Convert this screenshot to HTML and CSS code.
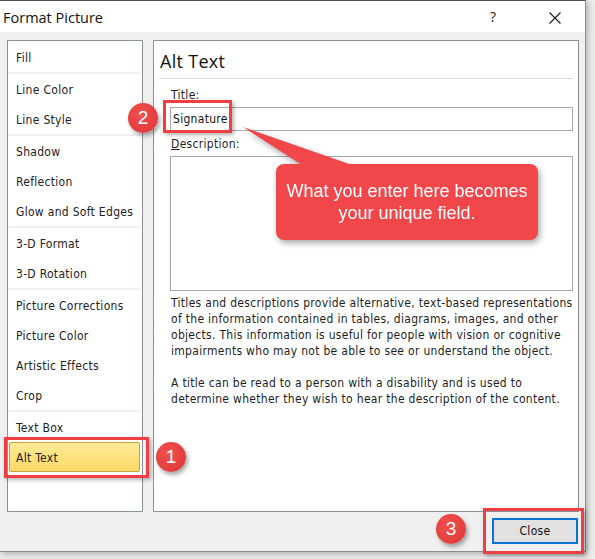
FILE: index.html
```html
<!DOCTYPE html>
<html>
<head>
<meta charset="utf-8">
<link rel="stylesheet" href="styles.css">
</head>
<body>
<div class="window">
  <div class="titlebar">
    <span class="title">Format Picture</span>
    <span class="help">?</span>
    <svg class="close-x" width="14" height="14" viewBox="0 0 14 14"><path d="M1.5 1.5 L12.5 12.5 M12.5 1.5 L1.5 12.5" stroke="#1a1a1a" stroke-width="1.1" fill="none"/></svg>
  </div>
  <div class="content">
    <div class="nav">
      <div class="group"><div class="item">Fill</div></div>
      <div class="group"><div class="item">Line Color</div><div class="item">Line Style</div></div>
      <div class="group"><div class="item">Shadow</div><div class="item">Reflection</div><div class="item">Glow and Soft Edges</div></div>
      <div class="group"><div class="item">3-D Format</div><div class="item">3-D Rotation</div></div>
      <div class="group"><div class="item">Picture Corrections</div><div class="item">Picture Color</div><div class="item">Artistic Effects</div><div class="item">Crop</div></div>
      <div class="group"><div class="item">Text Box</div><div class="item selected">Alt Text</div></div>
    </div>
    <div class="pane">
      <div class="pane-head">Alt Text</div>
      <div class="form">
        <div class="label">Title:</div>
        <div class="input">Signature</div>
        <div class="label label-desc"><u>D</u>escription:</div>
        <div class="textarea"></div>
        <p class="info">Titles and descriptions provide alternative, text-based representations<br>of the information contained in tables, diagrams, images, and other<br>objects. This information is useful for people with vision or cognitive<br>impairments who may not be able to see or understand the object.</p>
        <p class="info">A title can be read to a person with a disability and is used to<br>determine whether they wish to hear the description of the content.</p>
      </div>
    </div>
  </div>
  <div class="footer">
    <div class="btn">Close</div>
  </div>

  <div class="hl hl-title"></div>
  <div class="hl hl-alt"></div>
  <div class="hl hl-close"></div>
  <div class="badge badge-1">1</div>
  <div class="badge badge-2">2</div>
  <div class="badge badge-3">3</div>
  <div class="callout">
    <svg class="callout-shape" width="300" height="118" viewBox="0 0 300 118">
      <polygon points="3,3 62,41 112,41" fill="#f2474a"/>
      <rect x="36" y="40" width="262" height="76" rx="8" ry="8" fill="#f2474a"/>
    </svg>
    <div class="callout-text">What you enter here becomes<br>your unique field.</div>
  </div>
</div>
</body>
</html>
```
FILE: styles.css
```css
* { box-sizing: border-box; }
html, body { margin: 0; padding: 0; }
body {
  background: #ececec;
  width: 595px;
  height: 559px;
  overflow: hidden;
  font-family: "DejaVu Sans Condensed", "DejaVu Sans", sans-serif;
  font-size: 12px;
  color: #1e1e1e;
}
.window {
  position: relative;
  width: 586px;
  height: 552px;
  background: #f0f0f0;
  border-top: 1px solid #4d4d4d;
  border-right: 1px solid #8c8c8c;
  border-bottom: 1px solid #8c8c8c;
  box-shadow: 2px 2px 6px rgba(0,0,0,0.25);
}
.titlebar {
  height: 31px;
  background: #ffffff;
  display: flex;
  align-items: center;
  padding-left: 3px;
}
.title {
  font-family: "Open Sans", "Noto Sans", sans-serif;
  font-size: 14.5px;
  color: #111;
  flex: 1;
  margin-top: 1px;
}
.help {
  font-family: "Open Sans", "Noto Sans", sans-serif;
  font-size: 14px;
  color: #222;
  width: 10px;
  margin-right: 48px;
}
.close-x {
  margin-right: 23px;
  margin-top: 2px;
}
.content {
  display: flex;
  gap: 10px;
  padding: 8px 6px 0 7px;
}
.nav {
  width: 136px;
  height: 472px;
  background: #fff;
  border: 1px solid #8b8f96;
  padding: 1px;
}
.group + .group { border-top: 2px solid #eff0f4; }
.item {
  height: 30px;
  line-height: 32px;
  padding-left: 7px;
  letter-spacing: 0.3px;
  color: #222;
  white-space: nowrap;
}
.item.selected {
  width: 131px;
  border: 1px solid #c4a248;
  border-radius: 2px;
  background: linear-gradient(#fdeb97, #fcd965);
  line-height: 30px;
  padding-left: 6px;
}
.pane {
  width: 426px;
  height: 472px;
  background: #fff;
  border: 1px solid #8b8f96;
}
.pane-head {
  margin: 0 5px;
  padding: 8px 0 5px 1px;
  font-family: "Open Sans", "Noto Sans", sans-serif;
  font-size: 18px;
  line-height: 24px;
  letter-spacing: 0.3px;
  color: #111;
  border-bottom: 1px solid #d9d9d9;
}
.form {
  padding: 8px 5px 0 16px;
}
.label {
  line-height: 16px;
  padding-left: 1px;
  letter-spacing: 0.3px;
}
.label-desc { margin-top: 5px; }
.input {
  margin-top: 4px;
  height: 24px;
  border: 1px solid #a9a9a9;
  padding-left: 2px;
  line-height: 22px;
  letter-spacing: 0.3px;
  color: #111;
}
.textarea {
  margin-top: 4px;
  height: 135px;
  border: 1px solid #a9a9a9;
}
.info {
  margin: 4px 0 0;
  padding-left: 1px;
  line-height: 16px;
  letter-spacing: 0.3px;
  white-space: nowrap;
  color: #1e1e1e;
}
.info + .info { margin-top: 16px; }
.footer {
  display: flex;
  justify-content: flex-end;
  padding: 6px 7px 8px;
}
.btn {
  width: 86px;
  height: 26px;
  background: #e1e1e1;
  border: 2px solid #0a74d4;
  text-align: center;
  line-height: 22px;
  letter-spacing: 0.3px;
  color: #111;
}
/* annotations */
.hl {
  position: absolute;
  border: 3px solid #ef3f45;
  box-shadow: 2px 2px 4px rgba(0,0,0,0.3);
}
.hl-title { left: 163px; top: 99px; width: 69px; height: 33px; }
.hl-alt { left: 4px; top: 436px; width: 145px; height: 41px; }
.hl-close { left: 483px; top: 507px; width: 101px; height: 46px; }
.badge {
  position: absolute;
  width: 30px;
  height: 30px;
  border-radius: 50%;
  background: radial-gradient(circle at 40% 35%, #f25050, #dc3434);
  color: #fff;
  font-family: "Liberation Sans", Arial, sans-serif;
  font-size: 19px;
  line-height: 30px;
  text-align: center;
  box-shadow: 2px 3px 4px rgba(0,0,0,0.35);
}
.badge-1 { left: 156px; top: 441px; }
.badge-2 { left: 128px; top: 102px; }
.badge-3 { left: 436px; top: 513px; }
.callout {
  position: absolute;
  left: 240px;
  top: 123px;
  width: 300px;
  height: 118px;
  filter: drop-shadow(2px 3px 3px rgba(0,0,0,0.35));
}
.callout-shape { position: absolute; left: 0; top: 0; }
.callout-text {
  position: relative;
  margin: 56px 0 0 36px;
  width: 262px;
  text-align: center;
  color: #fff;
  font-family: "Liberation Sans", Arial, sans-serif;
  font-size: 18px;
  line-height: 22px;
}
```
